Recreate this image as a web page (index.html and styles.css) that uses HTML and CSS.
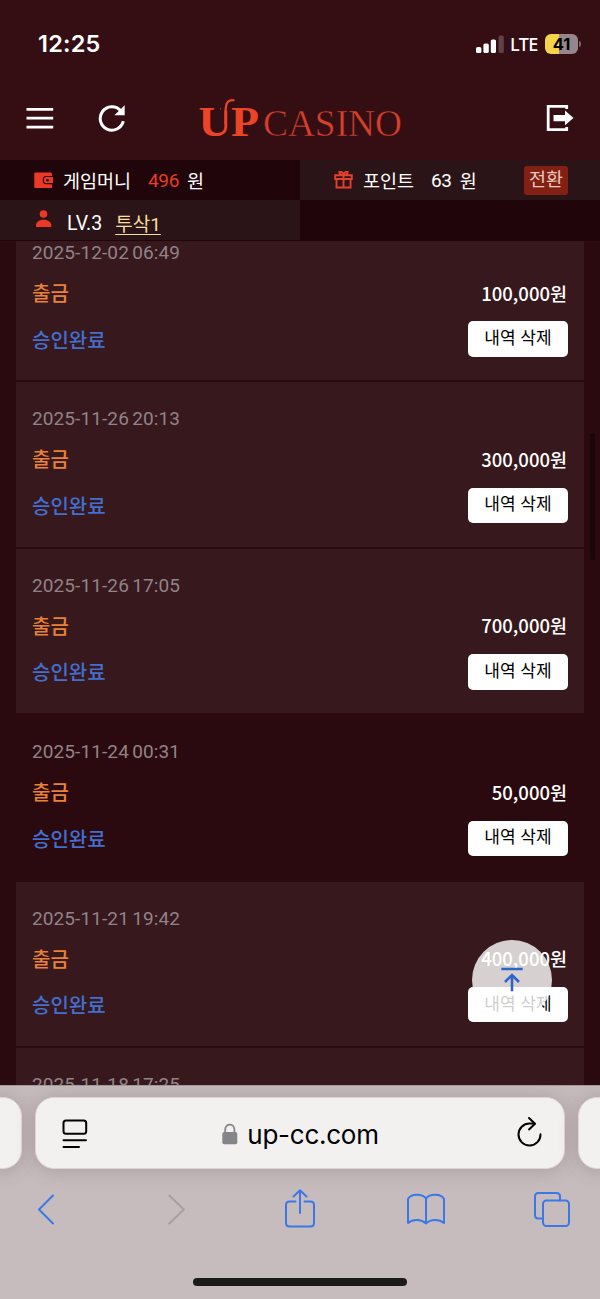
FILE: index.html
```html
<!DOCTYPE html>
<html lang="ko">
<head>
<meta charset="utf-8">
<title>UP CASINO</title>
<link rel="stylesheet" href="styles.css">
</head>
<body>
<div class="phone">
  <header class="top">
    <div class="status">
      <span class="clock">12:25</span>
      <span class="status-right">
        <svg class="signal" width="28" height="18" viewBox="0 0 28 18"><g fill="#fff"><rect x="0" y="12" width="5.4" height="6" rx="1.6"/><rect x="7.4" y="8.5" width="5.4" height="9.500" rx="1.6"/><rect x="14.800" y="4.500" width="5.200" height="13.500" rx="1.600"/><rect x="22.600" y="0.500" width="5.200" height="17.500" rx="1.600" opacity=".22"/></g></svg>
        <span class="lte">LTE</span>
        <span class="battery">41</span>
        <span class="battery-tip"></span>
      </span>
    </div>
    <nav class="nav">
      <svg class="menu" width="28" height="24" viewBox="0 0 28 24"><path d="M0.500 3.400H27.200M0.500 12.200H27.200M0.500 21.200H27.200" stroke="#fff" stroke-width="2.700"/></svg>
      <svg class="refresh" width="30" height="30" viewBox="0 0 30 30"><path d="M26.300 18.200A11.700 11.700 0 1 1 23.600 7.600" fill="none" stroke="#fff" stroke-width="3"/><path d="M27.700 2.200V12.200H17.400Z" fill="#fff"/></svg>
      <svg class="logo" width="208" height="60" viewBox="0 0 208 60">
        <text class="logo-up" x="0.500" y="48" textLength="33" lengthAdjust="spacingAndGlyphs">U</text>
        <path d="M23 20.700H35" stroke="#340e13" stroke-width="3.600"/>
        <text class="logo-up" x="33" y="48" textLength="28" lengthAdjust="spacingAndGlyphs">P</text>
        <path d="M27.600 36V24C27.600 15 29.500 11 36.500 12.500" fill="none" stroke="#ec4426" stroke-width="2.200"/>
        <text class="logo-casino" x="65" y="48" textLength="139" lengthAdjust="spacingAndGlyphs">CASINO</text>
      </svg>
      <svg class="exit" width="30" height="30" viewBox="0 0 30 30"><path d="M21.700 6V3.400H3.200V26.600H21.700V24" fill="none" stroke="#fff" stroke-width="2.800"/><path d="M8.500 12H20V7.500L28.500 15L20 22.200V18.200H8.500Z" fill="#fff"/></svg>
    </nav>
  </header>

  <section class="info">
    <div class="cell money">
      <svg class="ic" width="20" height="18" viewBox="0 0 20 18"><path d="M1.200 1.500H16.600Q18 1.500 18 3V16.500Q18 17 17 17H1.200Q.3 17 .3 16V2.500Q.3 1.500 1.200 1.500Z" fill="#ec3826"/><path d="M19 5.500H12Q9.300 5.500 9.300 9.200T12 12.700H19" fill="#ec3826" stroke="#24070b" stroke-width="1.200"/><circle cx="13.500" cy="9.200" r="1.300" fill="#24070b"/></svg>
      <span class="name">게임머니</span><span class="num red">496</span><span class="unit">원</span>
    </div>
    <div class="cell point">
      <svg class="ic" width="20" height="18" viewBox="0 0 20 18"><path d="M2.500 8V16.500H16.500V8M1.200 4.300H17.800V8H1.200ZM9.500 4.500V16M9.500 4Q5.500 4 5.300 1Q8.500 0 9.500 4Q10.500 0 13.700 1Q13.500 4 9.500 4Z" fill="none" stroke="#e5402d" stroke-width="1.900"/></svg>
      <span class="name">포인트</span><span class="num">63</span><span class="unit">원</span><span class="switch">전환</span>
    </div>
    <div class="cell level">
      <svg class="ic" width="18" height="18" viewBox="0 0 18 18"><circle cx="8.500" cy="4" r="3.800" fill="#ec3826"/><path d="M1 17V14.500C2 8 15 8 16.300 14.500V17Z" fill="#ec3826"/></svg>
      <span class="lv">LV.3</span><span class="user">투삭1</span>
    </div>
    <div class="cell blank"></div>
  </section>

  <main class="list">
    <div class="rows">
      <article class="row"><time>2025-12-02 06:49</time><div class="line"><b class="type">출금</b><b class="amount">100,000원</b></div><div class="line action"><b class="done">승인완료</b><button>내역 삭제</button></div></article>
      <article class="row"><time>2025-11-26 20:13</time><div class="line"><b class="type">출금</b><b class="amount">300,000원</b></div><div class="line action"><b class="done">승인완료</b><button>내역 삭제</button></div></article>
      <article class="row"><time>2025-11-26 17:05</time><div class="line"><b class="type">출금</b><b class="amount">700,000원</b></div><div class="line action"><b class="done">승인완료</b><button>내역 삭제</button></div></article>
      <article class="row plain"><time>2025-11-24 00:31</time><div class="line"><b class="type">출금</b><b class="amount">50,000원</b></div><div class="line action"><b class="done">승인완료</b><button>내역 삭제</button></div></article>
      <article class="row"><time>2025-11-21 19:42</time><div class="line"><b class="type">출금</b><b class="amount">400,000원</b></div><div class="line action"><b class="done">승인완료</b><button>내역 삭제</button></div></article>
      <article class="row"><time>2025-11-18 17:25</time></article>
    </div>
    <span class="scrollbar"></span>
    <span class="to-top"><svg width="24" height="26" viewBox="0 0 24 26"><path d="M1.300 2H22.700M12 24.300V8.500M5 15L12 8L19 15" fill="none" stroke="#2d65c9" stroke-width="2.600"/></svg></span>
  </main>

  <footer class="browser">
    <div class="tabs">
      <span class="tab"></span>
      <div class="address">
        <svg class="reader" width="26" height="30" viewBox="0 0 26 30"><g fill="none" stroke="#000" stroke-width="2" stroke-linecap="round"><rect x="1.500" y="1.500" width="22.700" height="13.200" rx="2.500"/><path d="M1.500 21.200H24M1.500 28H17"/></g></svg>
        <span class="host"><svg width="16" height="22" viewBox="0 0 16 22"><rect x=".3" y="9" width="15" height="12.300" rx="2" fill="#858488"/><path d="M3.200 10V6.500C3.200 0 12.400 0 12.400 6.500V10" fill="none" stroke="#858488" stroke-width="1.800"/></svg><span class="url">up-cc.com</span></span>
        <svg class="reload" width="26" height="32" viewBox="0 0 26 32"><g fill="none" stroke="#000" stroke-width="2" stroke-linecap="round" stroke-linejoin="round"><path d="M23.500 18.200A11 11 0 1 1 12.600 7.500Q15 7.300 17.800 7.700"/><path d="M12 2L18 7.700L12 13.400"/></g></svg>
      </div>
      <span class="tab"></span>
    </div>
    <div class="tools">
      <svg width="126" height="44" viewBox="0 0 126 44"><path d="M53 7.500L39 21.500L53 35.500" class="tool"/></svg>
      <svg width="126" height="44" viewBox="0 0 126 44"><path d="M43.300 7.500L57.800 21.500L43.300 35.500" class="tool off"/></svg>
      <svg width="126" height="44" viewBox="0 0 126 44"><path d="M43.500 13.500H37.500Q34 13.500 34 17V35Q34 38.500 37.500 38.500H58.500Q62 38.500 62 35V17Q62 13.500 58.500 13.500H52.500M48 25V2.500M41.500 8.500L48 2.200L54.500 8.500" class="tool"/></svg>
      <svg width="126" height="44" viewBox="0 0 126 44"><path d="M48 10.500V35.500C43 31 35 31 30 35V11C33 5.500 44 5.500 48 10.500C52 5.500 63 5.500 66 11V35C61 31 53 31 48 35.500" class="tool"/></svg>
      <svg width="96" height="44" viewBox="0 0 96 44"><rect x="39" y="12.500" width="26" height="25.500" rx="3.500" class="tool"/><path d="M39 30.500H34.500Q31 30.500 31 27V8.500Q31 5 34.500 5H52.500Q56 5 56 8.500V12.500" class="tool"/></svg>
    </div>
    <span class="home"></span>
  </footer>
</div>
</body>
</html>
```
FILE: styles.css
```css
* { box-sizing: border-box; }
body { margin: 0; }
svg { display: block; flex: none; }
.phone { width: 600px; height: 1299px; overflow: hidden; display: flex; flex-direction: column; background: #2a0a0e; color: #fff; font-family: Roboto, "Noto Sans CJK KR", sans-serif; white-space: nowrap; }

.top { height: 160px; background: #340e13; }
.status { height: 88px; display: flex; justify-content: space-between; align-items: center; padding: 0 19px 0 38px; }
.clock { font: 600 23.5px Inter, sans-serif; letter-spacing: .2px; margin-top: -1px; }
.status-right { display: flex; align-items: center; margin-top: -1px; }
.signal { margin-top: 1px; }
.lte { font: 500 18px "Noto Sans", sans-serif; letter-spacing: -.5px; margin: 0 0 0 6px; width: 35px; }
.battery { width: 33px; height: 20px; border-radius: 6px; background: linear-gradient(90deg, #f6d449 41%, #94868a 41%); color: #000; font: 700 16.500px/20px Inter, sans-serif; text-align: center; }
.battery-tip { width: 2px; height: 6px; margin-left: 1px; border-radius: 0 2px 2px 0; background: #79656a; }
.nav { height: 60px; display: flex; align-items: center; padding-left: 26px; }
.refresh { margin-left: 43px; }
.logo { margin-left: 71px; }
.logo-up { font: 700 42px "Liberation Serif", serif; fill: #ec4426; }
.logo-casino { font: 400 37px "Liberation Serif", serif; fill: #d8402b; stroke: #340e13; stroke-width: .5px; }
.exit { margin-left: 139px; }

.info { height: 81px; display: grid; grid-template-columns: 300px 300px; grid-template-rows: 40px 41px; background: #20060a; font-size: 19px; }
.cell { display: flex; align-items: center; padding-left: 34px; }
.point, .level { background: #2a1417; }
.level { border-bottom: 1px solid #20060a; }
.name { margin-left: 9px; font-size: 18.500px; }
.num { margin-left: 17px; letter-spacing: -.4px; }
.red { color: #e93a29; }
.unit { margin-left: 8px; font-size: 18.500px; }
.switch { margin-left: auto; margin-right: 32px; width: 44px; height: 29px; border-radius: 3px; background: #822014; color: #efc9bd; text-align: center; font-size: 18.500px; line-height: 29px; }
.level .ic { margin: -3px 0 0 1px; }
.lv { margin: 6px 0 0 14px; font-size: 19.500px; }
.user { margin: 4px 0 0 13px; color: #f4dfa0; text-decoration: underline; text-underline-offset: 3px; text-decoration-thickness: 1px; }

.list { position: relative; height: 844px; overflow: hidden; padding: 0 16px; }
.rows { display: flex; flex-direction: column; gap: 2px; margin-top: -25px; }
.row { flex: none; height: 164.400px; padding: 23px 16px 0; background: #36181d; }
.row.plain { background: transparent; }
.row time { display: block; height: 26.600px; font-size: 19px; line-height: 27px; color: #928388; letter-spacing: .1px; word-spacing: -1.500px; }
.line { height: 54px; display: flex; align-items: center; justify-content: space-between; font-family: "Noto Sans CJK KR", sans-serif; }
.line b { font-weight: 500; font-size: 20px; }
.action { height: 39px; }
.line .type { color: #e98236; }
.line .amount { font-size: 18.500px; margin-right: 1px; }
.line .done { color: #426fd0; }
.line button { width: 100px; height: 35.500px; padding: 0 0 4px; border: 0; border-radius: 5px; background: #fff; color: #000; font: 400 17px/30px "Noto Sans CJK KR", sans-serif; }
.scrollbar { position: absolute; left: 590px; top: 192px; width: 5px; height: 127px; border-radius: 3px; background: #1b060a; }
.to-top { position: absolute; left: 472px; top: 699px; width: 80px; height: 80px; border-radius: 50%; background: rgba(255,255,255,.8); display: grid; place-items: center; }

.browser { height: 214px; background: #c6bcbd; border-top: 1px solid #a3999b; overflow: hidden; display: flex; flex-direction: column; align-items: center; }
.tabs { width: 642px; height: 95px; flex: none; padding-top: 11px; display: flex; justify-content: center; gap: 13px; }
.tab, .address { height: 72px; border-radius: 19px; background: #f2f1f0; box-shadow: 0 1px 20px rgba(75,55,60,.24); border: 1px solid #ddd5d6; }
.tab { width: 43px; flex: none; }
.address { width: 530px; flex: none; display: flex; align-items: center; justify-content: space-between; padding: 2px 21px 0 26px; color: #000; }
.host { display: flex; align-items: center; gap: 9px; margin-right: 4px; }
.url { font: 400 26px/30px Inter, sans-serif; letter-spacing: -.25px; margin-top: 1px; }
.reload { margin-top: -4px; }
.tools { width: 600px; height: 80px; display: flex; padding-top: 7px; }
.tool { fill: none; stroke: #3b78e7; stroke-width: 2; stroke-linecap: round; stroke-linejoin: round; }
.tool.off { stroke: #a99fa1; }
.home { width: 214px; height: 8px; margin-top: 17px; border-radius: 4px; background: #1b1b1a; flex: none; }
```
